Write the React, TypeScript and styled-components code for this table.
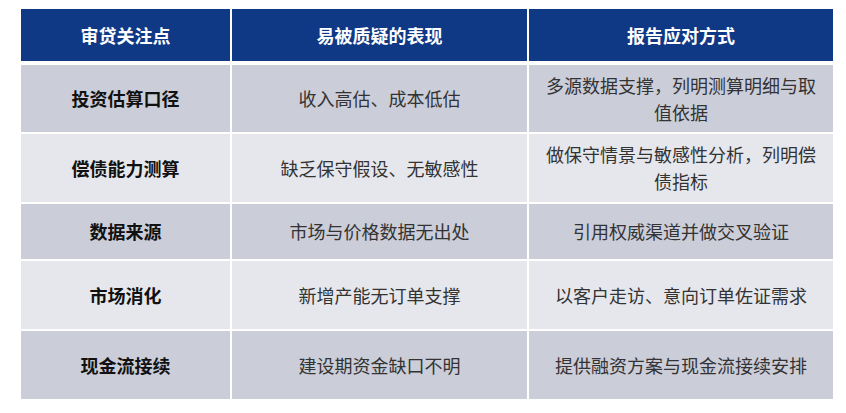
import styled, { createGlobalStyle } from 'styled-components';

const GlobalStyle = createGlobalStyle`
  body {
    margin: 0;
    background: #ffffff;
    font-family: "Liberation Serif", "Noto Sans CJK SC", serif;
  }
`;

const Page = styled.div`
  padding: 9px 0 0 21px;
`;

const Table = styled.div`
  width: 812px;
  display: grid;
  grid-template-columns: 209px 295px 304px;
  grid-template-rows: 54px 67px 68px 55px 68px 68px;
  gap: 2px;
  background: #ffffff;
`;

const HeadCell = styled.div`
  display: flex;
  align-items: center;
  justify-content: center;
  margin-bottom: 2px;
  background: #0f3885;
  color: #ffffff;
  font-family: "Noto Sans CJK SC", sans-serif;
  font-weight: 700;
  font-size: 18px;
`;

const Cell = styled.div<{ $shade: boolean; $bold?: boolean }>`
  display: flex;
  align-items: center;
  justify-content: center;
  padding: 0 12px;
  text-align: center;
  background: ${(p) => (p.$shade ? '#cbcdd9' : '#e6e7ed')};
  color: ${(p) => (p.$bold ? '#111111' : '#333333')};
  font-family: "Noto Sans CJK SC", sans-serif;
  font-weight: ${(p) => (p.$bold ? 700 : 400)};
  font-size: 18px;
  line-height: 27px;
`;

const headers = ['审贷关注点', '易被质疑的表现', '报告应对方式'];

const rows = [
  ['投资估算口径', '收入高估、成本低估', '多源数据支撑，列明测算明细与取值依据'],
  ['偿债能力测算', '缺乏保守假设、无敏感性', '做保守情景与敏感性分析，列明偿债指标'],
  ['数据来源', '市场与价格数据无出处', '引用权威渠道并做交叉验证'],
  ['市场消化', '新增产能无订单支撑', '以客户走访、意向订单佐证需求'],
  ['现金流接续', '建设期资金缺口不明', '提供融资方案与现金流接续安排'],
];

export default function App() {
  return (
    <Page>
      <GlobalStyle />
      <Table>
        {headers.map((h) => (
          <HeadCell key={h}>{h}</HeadCell>
        ))}
        {rows.map((row, i) =>
          row.map((text, j) => (
            <Cell key={`${i}-${j}`} $shade={i % 2 === 0} $bold={j === 0}>
              {text}
            </Cell>
          ))
        )}
      </Table>
    </Page>
  );
}
